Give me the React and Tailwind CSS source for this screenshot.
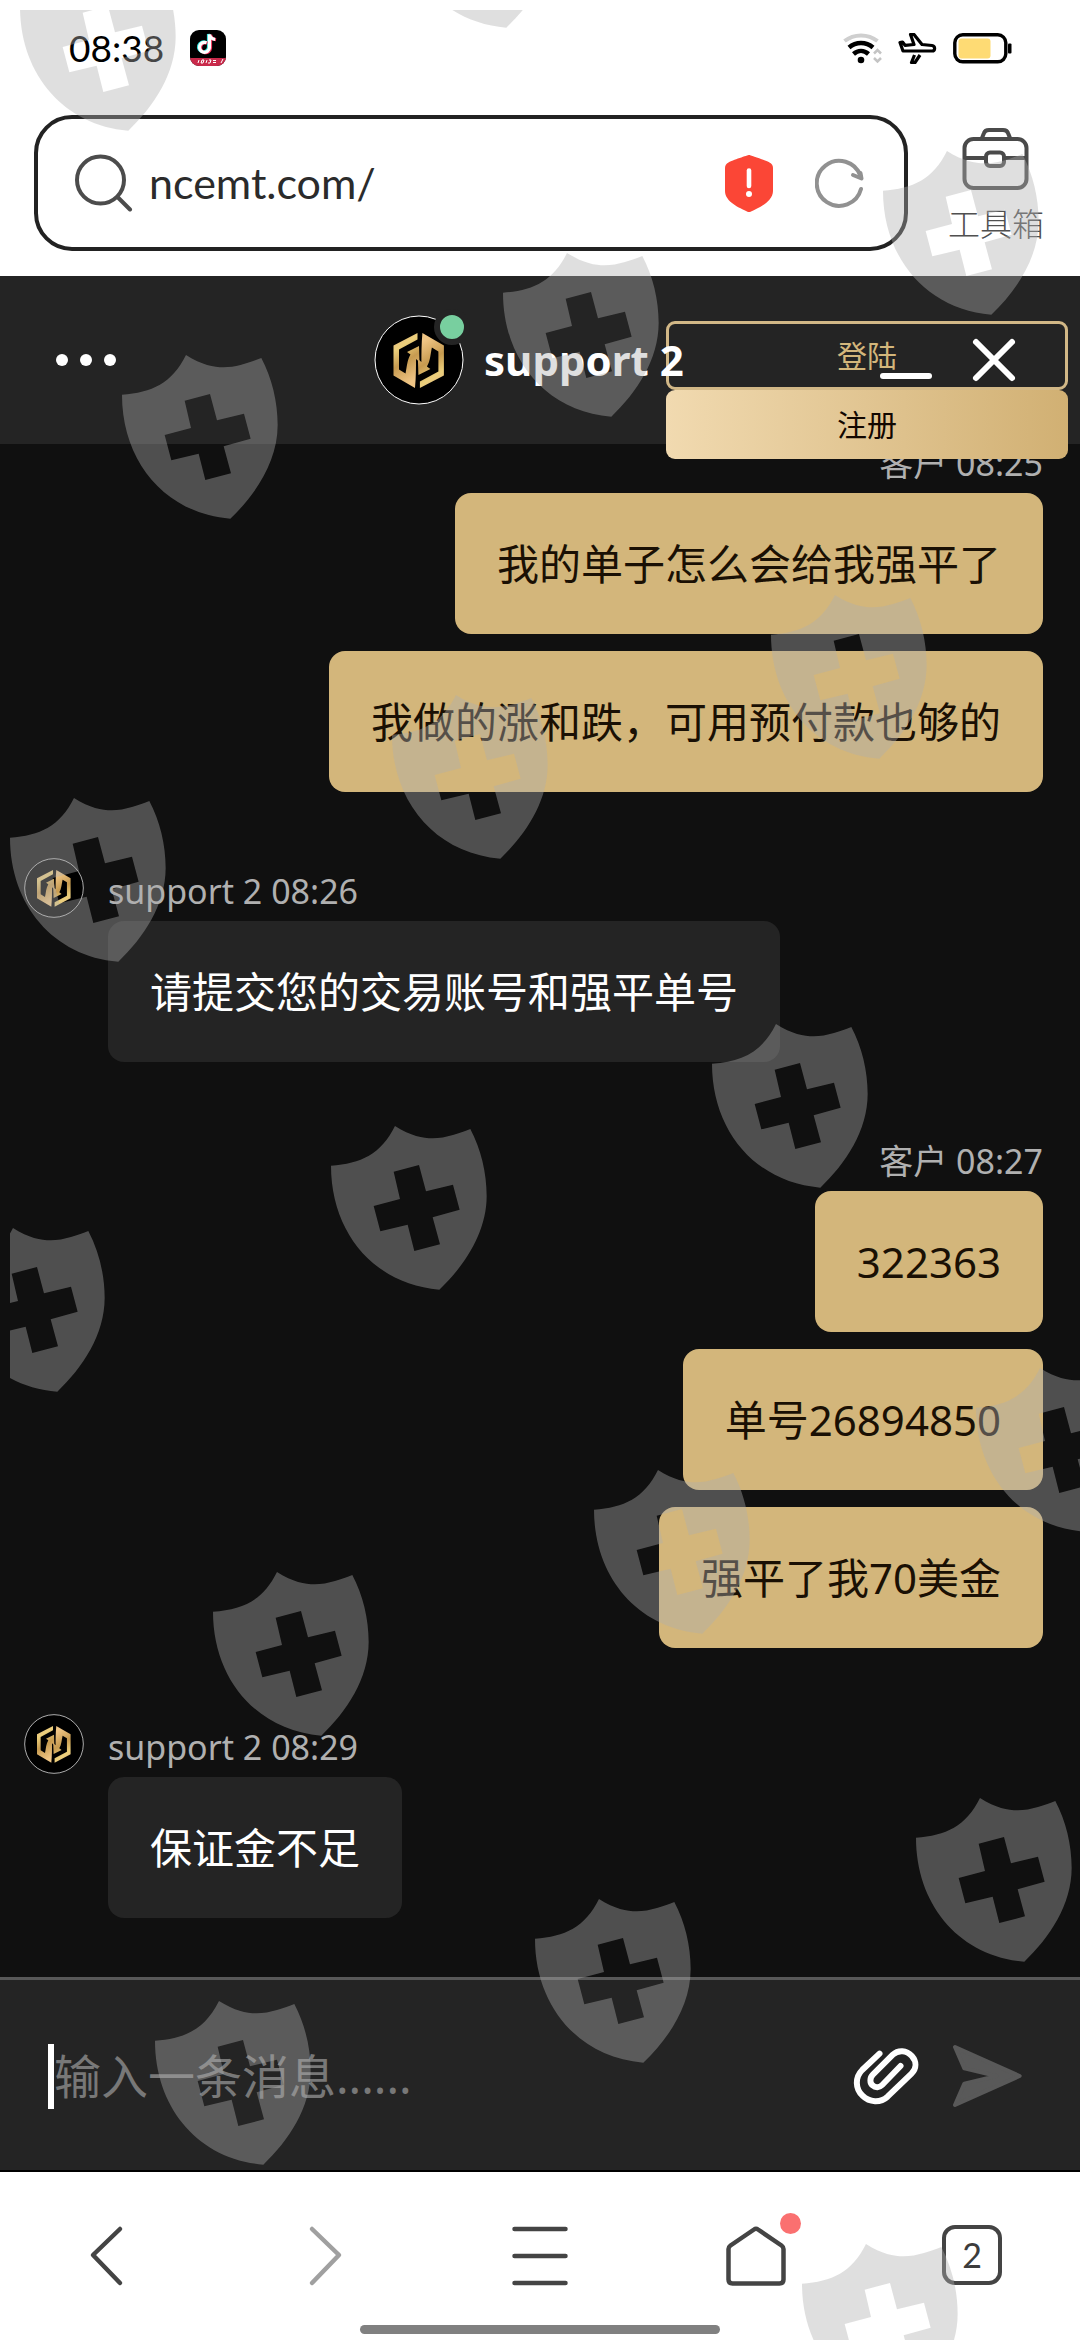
import React from "react";

const MARKS = [
  [20, -33], [398, -136], [883, 151], [503, 253], [122, 355], [771, 595],
  [392, 695], [10, 798], [712, 1024], [331, 1126], [-51, 1228], [976, 1368],
  [594, 1470], [213, 1572], [916, 1798], [535, 1899], [155, 2001], [802, 2244],
];

function ShieldPattern() {
  return (
    <svg
      className="pointer-events-none absolute inset-0 z-50 h-full w-full"
      viewBox="0 0 1080 2340"
      preserveAspectRatio="xMinYMin slice"
      aria-hidden="true"
    >
      <defs>
        <clipPath id="pattern-area">
          <rect x="10" y="10" width="1080" height="2340" />
        </clipPath>
        <path
          id="shield-cross"
          transform="scale(0.3333)"
          fillRule="evenodd"
          d="M192 0C240 30 275 37 305 37C345 37 390 20 418 9C450 70 467 140 467 210C467 320 400 420 325 491C130 475 0 320 0 119C90 113 150 85 192 0ZM188 137L207 219L128 240L148 316L230 296L250 375L327 355L305 274L386 251L366 176L285 196L264 117Z"
        />
      </defs>
      <g clipPath="url(#pattern-area)" fill="#afafaf" fillOpacity="0.4">
        {MARKS.map(([x, y]) => (
          <use key={`${x}-${y}`} href="#shield-cross" x={x} y={y} />
        ))}
      </g>
    </svg>
  );
}

function AppBadge() {
  return (
    <svg className="h-9 w-9" viewBox="0 0 36 36" aria-hidden="true">
      <defs>
        <clipPath id="badge"><rect width="36" height="36" rx="9" /></clipPath>
      </defs>
      <g clipPath="url(#badge)">
        <rect width="36" height="36" fill="#000" />
        <g fill="none" strokeWidth="3.2">
          <path d="M16.5 12.7a5 5 0 1 0 3 5V4.5c.6 3 2.6 4.6 5.6 4.8" stroke="#35e6e0" transform="translate(-1 -.4)" />
          <path d="M16.5 12.7a5 5 0 1 0 3 5V4.5c.6 3 2.6 4.6 5.6 4.8" stroke="#f3305a" transform="translate(1 .4)" />
          <path d="M16.5 12.7a5 5 0 1 0 3 5V4.5c.6 3 2.6 4.6 5.6 4.8" stroke="#fff" />
        </g>
        <rect y="28" width="36" height="8" fill="#c92a4b" />
        <path d="M8 33l1-3M11 33l1-3h2l-1 3zM16 33l1-3M19 30h2l-1 3h-2M23 30.500h3M23 32.500h3M31 33l2-4" stroke="#fff" strokeWidth="1" fill="none" />
      </g>
    </svg>
  );
}

function StatusBar() {
  return (
    <div className="flex h-24 items-center justify-between pl-[69px] pr-[68px] text-black">
      <div className="flex items-center gap-[26px]">
        <span className="font-['Lato',sans-serif] text-[37px] leading-[40px]">08:38</span>
        <AppBadge />
      </div>
      <div className="flex items-center gap-4">
        <svg className="h-[31px] w-[39px]" viewBox="0 0 39 31" fill="none" aria-hidden="true">
          <path d="M1.500 8C11 .5 25 .5 34.500 8" stroke="#cfcfcf" strokeWidth="4" />
          <path d="M6 14.500C13 8.500 23 8.500 30 14.500" stroke="#000" strokeWidth="4.500" />
          <path d="M10.500 21C15 17 21 17 25.500 21" stroke="#000" strokeWidth="4.500" />
          <circle cx="18" cy="27" r="3.300" fill="#000" />
          <path d="M31 20.500l3.500-3.500 3.500 3.500M31 25l3.500 3.500L38 25" stroke="#c4c4c4" strokeWidth="2.500" />
        </svg>
        <svg className="h-[31px] w-[39px]" viewBox="0 0 39 31" fill="none" stroke="#000" strokeWidth="3.200" strokeLinejoin="round" aria-hidden="true">
          <path d="M2 9.500l3 8.500h29c3.500 0 3.500-5 0-5.500l-10-1L16 1.500h-3.500l3.500 10-9 .8L4.500 9z" />
          <path d="M16.500 22l-3 7.500h3.500l5-7.500" />
        </svg>
        <svg className="h-[31px] w-[59px]" viewBox="0 0 59 31" aria-hidden="true">
          <rect x="1.800" y="1.800" width="51" height="27" rx="8" fill="none" stroke="#000" strokeWidth="3.400" />
          <rect x="5.500" y="5.500" width="32" height="20" rx="3" fill="#fedb74" />
          <rect x="55" y="10.500" width="3.500" height="10" rx="1" fill="#000" />
        </svg>
      </div>
    </div>
  );
}

function AddressBar() {
  return (
    <div className="flex gap-10 pb-[25px] pl-[34px] pr-9 pt-[19px]">
      <form className="flex h-[136px] min-w-0 flex-1 items-center rounded-[38px] border-4 border-[#222222] bg-white pl-[37px] pr-10" onSubmit={(e) => e.preventDefault()}>
        <svg className="h-[58px] w-[58px] shrink-0" viewBox="0 0 58 58" fill="none" stroke="#4c4c4c" strokeWidth="4" strokeLinecap="round" aria-hidden="true">
          <circle cx="25.500" cy="26" r="23.500" />
          <path d="M43 43.500L55 55.500" />
        </svg>
        <input
          aria-label="网址"
          defaultValue="ncemt.com/"
          className="ml-4 min-w-0 flex-1 bg-transparent font-['Lato',sans-serif] text-[43px] leading-[56px] text-[#2b2b2b] outline-none"
        />
        <button type="button" aria-label="安全警告" className="shrink-0">
          <svg className="h-[58px] w-12" viewBox="0 0 48 58" aria-hidden="true">
            <path d="M24 1C25 1 41 6.500 44.500 8.500Q48 10 48 14V37C48 48 33 54 26 57.500Q24 58.500 22 57.500C15 54 0 48 0 37V14Q0 10 3.500 8.500C7 6.500 23 1 24 1Z" fill="#fb4636" />
            <path d="M24 16.500V32" stroke="#fff" strokeWidth="4.600" strokeLinecap="round" />
            <circle cx="24" cy="40" r="3" fill="#fff" />
          </svg>
        </button>
        <button type="button" aria-label="刷新" className="ml-[42px] shrink-0">
          <svg className="h-[50px] w-[49px]" viewBox="0 0 49 50" fill="none" stroke="#919191" strokeWidth="4" strokeLinecap="round" strokeLinejoin="round" aria-hidden="true">
            <path d="M46 31A22.500 22.500 0 1 1 45.500 18" />
            <path d="M38 17L46.500 20.500L45.500 15" />
          </svg>
        </button>
      </form>
      <button type="button" className="flex flex-col items-center pt-[13px]">
        <svg className="h-[62px] w-[67px]" viewBox="0 0 67 62" fill="none" stroke="#4a4a4a" strokeWidth="4" aria-hidden="true">
          <rect x="2.500" y="11" width="62" height="49" rx="9" />
          <path d="M20 10L22 5Q23 2 27 2H41Q45 2 46 5L48 10M3 30H24M42 30H64" />
          <rect x="24" y="24.500" width="18" height="13.500" rx="4" />
        </svg>
        <span className="mt-3 font-['Noto_Sans_CJK_SC',sans-serif] text-[32px] font-light leading-[40px] text-[#505050]">工具箱</span>
      </button>
    </div>
  );
}

function Avatar({ className }) {
  return (
    <svg className={className} viewBox="0 0 90 90" role="img" aria-label="support 2">
      <defs>
        <linearGradient id="gold" x1="0" y1="0" x2="0.300" y2="1">
          <stop offset="0" stopColor="#e2b183" />
          <stop offset="0.300" stopColor="#ecd07c" />
          <stop offset="0.600" stopColor="#c79b50" />
          <stop offset="1" stopColor="#efc585" />
        </linearGradient>
        <path id="half-hex" d="M43.500 18L19.500 30.500V60.500L41 73C42 62 42 52 42 44L45.500 47L45 31L33 37L36.500 39.500C33 45 33 52 31.500 58.500L25 54.500V34.500L43.500 24.500Z" />
      </defs>
      <circle cx="45" cy="45" r="44" fill="#000" stroke="#fff" strokeWidth="1" />
      <use href="#half-hex" fill="url(#gold)" />
      <use href="#half-hex" fill="url(#gold)" transform="rotate(180 44.700 45.500)" />
    </svg>
  );
}

function ChatHeader() {
  return (
    <header className="relative z-10 flex h-[168px] items-center bg-[#242424]">
      <div className="absolute right-3 top-[45px] w-[402px] font-['Noto_Sans','Noto_Sans_CJK_SC',sans-serif] text-[30px]">
        <button type="button" className="block h-[69px] w-full rounded-[9px] border-[3px] border-[#d2b887] text-[#d3b67b]">登陆</button>
        <button type="button" className="block h-[69px] w-full rounded-[9px] bg-gradient-to-r from-[#f1dab0] to-[#d1b073] text-[#120700]">注册</button>
      </div>
      <div className="w-[374px] pl-14">
        <button type="button" aria-label="菜单" className="flex gap-3">
          <span className="size-3 rounded-full bg-white" />
          <span className="size-3 rounded-full bg-white" />
          <span className="size-3 rounded-full bg-white" />
        </button>
      </div>
      <div className="relative flex items-center gap-5">
        <span className="relative">
          <Avatar className="size-[90px]" />
          <span className="absolute -right-1.5 -top-1.5 size-9 rounded-full border-[6px] border-[#242424] bg-[#78cf9f]" />
        </span>
        <h1 className="font-['Noto_Sans',sans-serif] text-[42px] font-bold leading-[56px] text-white">support 2</h1>
      </div>
      <div className="relative ml-auto flex items-center gap-[39px] pr-[63px]">
        <button type="button" aria-label="最小化" className="flex h-[46px] w-[52px] items-end pb-1">
          <span className="h-1.5 w-full rounded-full bg-white" />
        </button>
        <button type="button" aria-label="关闭">
          <svg className="h-[46px] w-[46px]" viewBox="0 0 46 46" stroke="#fff" strokeWidth="6" strokeLinecap="round" aria-hidden="true">
            <path d="M5 5L41 41M41 5L5 41" />
          </svg>
        </button>
      </div>
    </header>
  );
}

const THREAD = [
  { mine: true, time: "客户 08:25", lines: ["我的单子怎么会给我强平了", "我做的涨和跌，可用预付款也够的"] },
  { mine: false, time: "support 2 08:26", lines: ["请提交您的交易账号和强平单号"] },
  { mine: true, time: "客户 08:27", lines: ["322363", "单号26894850", "强平了我70美金"] },
  { mine: false, time: "support 2 08:29", lines: ["保证金不足"] },
];

function Group({ mine, time, lines }) {
  return (
    <article className={mine ? "flex shrink-0 justify-end" : "flex shrink-0 items-start gap-6"}>
      {!mine && <Avatar className="size-[60px] shrink-0" />}
      <div className={mine ? "flex flex-col items-end pt-[9px]" : "flex flex-col items-start pt-[9px]"}>
        <span className="mb-1.5 text-[34px] leading-[48px] text-[#b0b0b0]">{time}</span>
        <div className={mine ? "flex flex-col items-end gap-[17px]" : "flex flex-col items-start gap-[17px]"}>
          {lines.map((line) => (
            <p
              key={line}
              className={
                mine
                  ? "rounded-2xl bg-[#d3b67b] p-[42px] text-[42px] leading-[57px] text-[#1a1004]"
                  : "rounded-2xl bg-[#242424] p-[42px] text-[42px] leading-[57px] text-white"
              }
            >
              {line}
            </p>
          ))}
        </div>
      </div>
    </article>
  );
}

function Composer() {
  return (
    <form className="flex h-[195px] shrink-0 items-center border-b-2 border-t-[3px] border-b-black border-t-[#585858] bg-[#242424] pl-12 pr-[58px] pt-0.5" onSubmit={(e) => e.preventDefault()}>
      <span className="h-[65px] w-1.5 bg-white" />
      <input
        aria-label="输入一条消息"
        placeholder="输入一条消息......"
        className="h-[65px] min-w-0 flex-1 bg-transparent text-[47px] text-white outline-none placeholder:text-[#787878]"
      />
      <button type="button" aria-label="附件">
        <svg className="h-[60px] w-[67px]" viewBox="510 260 200 180" fill="none" stroke="#fff" strokeWidth="18" strokeLinecap="round" strokeLinejoin="round" aria-hidden="true">
          <path d="M592 283L540 332C518 354 519 388 541 409C562 430 595 431 616 412L688 343C704 327 703 306 689 290C673 272 648 271 632 286L572 346C562 356 563 371 571 378C580 386 592 385 600 377L655 320" />
        </svg>
      </button>
      <button type="submit" aria-label="发送" className="ml-[33px]">
        <svg className="h-[64px] w-[70px]" viewBox="811 252 210 192" fill="#595959" stroke="#595959" strokeWidth="12" strokeLinejoin="round" aria-hidden="true">
          <path d="M820 261L1014 348L820 435L848 371L945 348L848 325Z" />
        </svg>
      </button>
    </form>
  );
}

function BrowserNav() {
  return (
    <nav className="flex h-[168px] shrink-0 flex-col items-center bg-white">
      <div className="grid w-full grid-cols-5 pt-[53px]">
        <button type="button" aria-label="后退" className="flex justify-center">
          <svg className="size-[62px]" viewBox="0 0 62 62" fill="none" stroke="#444" strokeWidth="4.500" strokeLinecap="round" strokeLinejoin="round" aria-hidden="true"><path d="M43 4L16 30L43 58" /></svg>
        </button>
        <button type="button" aria-label="前进" className="flex justify-center">
          <svg className="size-[62px]" viewBox="0 0 62 62" fill="none" stroke="#a0a0a0" strokeWidth="4.500" strokeLinecap="round" strokeLinejoin="round" aria-hidden="true"><path d="M19 4L46 30L19 58" /></svg>
        </button>
        <button type="button" aria-label="菜单" className="flex justify-center">
          <svg className="size-[62px]" viewBox="0 0 62 62" fill="none" stroke="#444" strokeWidth="4.500" strokeLinecap="round" aria-hidden="true"><path d="M5.500 4H56.500M5.500 31H56.500M5.500 58H56.500" /></svg>
        </button>
        <button type="button" aria-label="主页" className="flex justify-center">
          <span className="relative">
            <svg className="size-[62px]" viewBox="0 0 62 62" fill="none" stroke="#444" strokeWidth="4.500" strokeLinejoin="round" aria-hidden="true"><path d="M29 4.500Q31 3 33 4.500L56.500 20.500Q58.500 22 58.500 24V54.500Q58.500 58.500 54.500 58.500H7.500Q3.500 58.500 3.500 54.500V24Q3.500 22 5.500 20.500Z" /></svg>
            <span className="absolute -right-[14px] -top-3 size-[21px] rounded-full bg-[#fa7070]" />
          </span>
        </button>
        <button type="button" aria-label="标签页 2" className="flex justify-center">
          <span className="flex size-[60px] items-center justify-center rounded-[13px] border-4 border-[#444444] font-['Lato',sans-serif] text-[34px] leading-[40px] text-[#3c3c3c]">2</span>
        </button>
      </div>
      <div className="mb-1.5 mt-auto h-[9px] w-1/3 rounded-full bg-[#808080]" />
    </nav>
  );
}

export default function App() {
  return (
    <div className="relative flex h-screen flex-col overflow-hidden bg-white font-['Noto_Sans','Noto_Sans_CJK_SC',sans-serif]">
      <div className="shrink-0">
        <StatusBar />
        <AddressBar />
        <ChatHeader />
      </div>
      <main className="flex min-h-0 flex-1 flex-col justify-end gap-[66px] bg-[#101010] pb-[59px] pl-6 pr-[37px]">
        {THREAD.map((group) => (
          <Group key={group.time} {...group} />
        ))}
      </main>
      <Composer />
      <BrowserNav />
      <ShieldPattern />
    </div>
  );
}
